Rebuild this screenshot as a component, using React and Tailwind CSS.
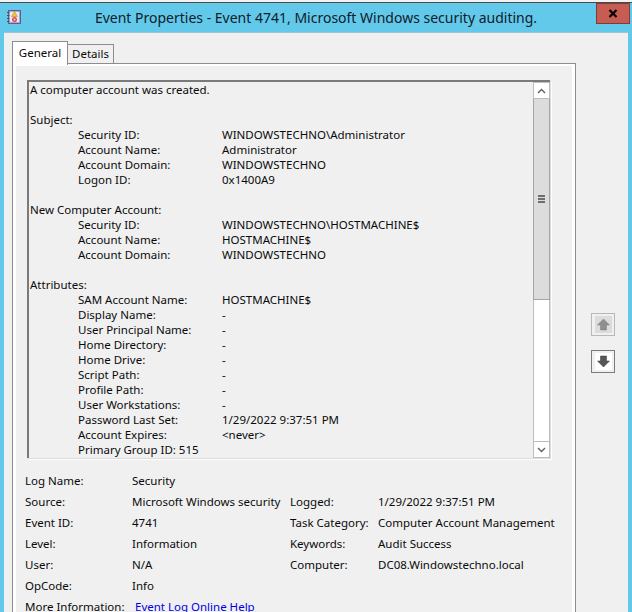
import React from 'react'

const font = { fontFamily: '"Noto Sans", "Open Sans", sans-serif' }

const detailRows = [
  { text: 'A computer account was created.' },
  {},
  { text: 'Subject:' },
  { label: 'Security ID:', value: 'WINDOWSTECHNO\\Administrator' },
  { label: 'Account Name:', value: 'Administrator' },
  { label: 'Account Domain:', value: 'WINDOWSTECHNO' },
  { label: 'Logon ID:', value: '0x1400A9' },
  {},
  { text: 'New Computer Account:' },
  { label: 'Security ID:', value: 'WINDOWSTECHNO\\HOSTMACHINE$' },
  { label: 'Account Name:', value: 'HOSTMACHINE$' },
  { label: 'Account Domain:', value: 'WINDOWSTECHNO' },
  {},
  { text: 'Attributes:' },
  { label: 'SAM Account Name:', value: 'HOSTMACHINE$' },
  { label: 'Display Name:', value: '-' },
  { label: 'User Principal Name:', value: '-' },
  { label: 'Home Directory:', value: '-' },
  { label: 'Home Drive:', value: '-' },
  { label: 'Script Path:', value: '-' },
  { label: 'Profile Path:', value: '-' },
  { label: 'User Workstations:', value: '-' },
  { label: 'Password Last Set:', value: '1/29/2022 9:37:51 PM' },
  { label: 'Account Expires:', value: '<never>' },
  { indented: 'Primary Group ID: 515' },
]

const infoRows = [
  ['Log Name:', 'Security', '', ''],
  ['Source:', 'Microsoft Windows security', 'Logged:', '1/29/2022 9:37:51 PM'],
  ['Event ID:', '4741', 'Task Category:', 'Computer Account Management'],
  ['Level:', 'Information', 'Keywords:', 'Audit Success'],
  ['User:', 'N/A', 'Computer:', 'DC08.Windowstechno.local'],
  ['OpCode:', 'Info', '', ''],
]

function LogIcon() {
  return (
    <svg width="14" height="14" viewBox="0 0 14 14" className="shrink-0">
      <rect x="1.5" y="0.5" width="12" height="13" fill="#a9a6d6" stroke="#5f5f8c" />
      <rect x="3" y="2" width="9" height="10" fill="#eceaf5" />
      <path d="M7.5 1.5 L10.5 6.5 H4.5 Z" fill="#f3c532" stroke="#a67c13" strokeWidth="0.5" />
      <circle cx="7.5" cy="9.5" r="2.5" fill="#d84a4f" />
      <circle cx="7.5" cy="9.5" r="1" fill="#f6dcdc" />
      <path d="M0 2.5h2.5M0 5.5h2.5M0 8.5h2.5M0 11.5h2.5" stroke="#4f4d66" />
    </svg>
  )
}

function ScrollBar() {
  return (
    <div className="flex w-[17px] shrink-0 flex-col">
      <div className="flex h-[17px] items-center justify-center border border-[#bdbdbd] bg-white">
        <svg width="9" height="6" viewBox="0 0 9 6"><path d="M1 5 L4.5 1.5 L8 5" fill="none" stroke="#606060" strokeWidth="1.4" /></svg>
      </div>
      <div className="flex h-[201px] items-center justify-center border-x border-b border-[#a6a6a6] bg-[#dcdcdc]">
        <div className="flex w-[7px] flex-col gap-px">
          <div className="h-[2px] bg-[#6e6e6e]" />
          <div className="h-[2px] bg-[#6e6e6e]" />
          <div className="h-[2px] bg-[#6e6e6e]" />
        </div>
      </div>
      <div className="flex-1 border-x border-[#bdbdbd] bg-white" />
      <div className="flex h-[17px] items-center justify-center border border-[#bdbdbd] bg-white">
        <svg width="9" height="6" viewBox="0 0 9 6"><path d="M1 1 L4.5 4.5 L8 1" fill="none" stroke="#606060" strokeWidth="1.4" /></svg>
      </div>
    </div>
  )
}

function ArrowButton({ down }) {
  return (
    <div className={`flex h-[23px] w-[24px] items-center justify-center border-[1.5px] bg-[#f0f0f0] ${down ? 'border-[#7c7c7c]' : 'border-[#b8b8b8]'}`}>
      <div className={`flex h-[17px] w-[17px] items-center justify-center ${down ? 'bg-white' : 'bg-[#dcdcdc]'}`}>
        <svg width="13" height="13" viewBox="0 0 13 13">
          <path
            d={down ? 'M3.5 1h6v5h3l-6 6-6-6h3z' : 'M3.5 12h6V7h3l-6-6-6 6h3z'}
            fill={down ? '#565656' : '#8f8f8f'}
            stroke={down ? '#3a3a3a' : '#7f7f7f'}
            strokeWidth="0.5"
          />
        </svg>
      </div>
    </div>
  )
}

export default function App() {
  return (
    <div style={font} className="flex h-[612px] w-[632px] flex-col overflow-hidden bg-[#63c9ea] text-[11.5px] leading-[15px] text-[#0a0a0a]">
      <div className="h-[2px] shrink-0 bg-[#f2f2f2]" />
      <div className="h-[1px] shrink-0 bg-[#4a4a4a]" />

      {/* title bar */}
      <div className="grid h-[29px] shrink-0 grid-cols-[1fr_auto_1fr] items-start">
        <div className="pl-[7px] pt-[7px]"><LogIcon /></div>
        <div className="whitespace-nowrap pt-[5px] text-[14px] leading-[20px] text-[#10202a]">
          Event Properties - Event 4741, Microsoft Windows security auditing.
        </div>
        <div className="flex justify-end pr-[2px]">
          <div className="flex h-[21px] w-[34px] items-center justify-center border border-[#7a3d38] bg-[#c75c52]">
            <svg width="10" height="9" viewBox="0 0 10 9"><path d="M1.5 1 L8.5 8 M8.5 1 L1.5 8" stroke="#000" strokeWidth="2.2" /></svg>
          </div>
        </div>
      </div>

      {/* client area */}
      <div className="ml-[4px] mr-[4px] flex min-h-0 flex-1 border-t border-[#9fc4d6] bg-[#f0f0f0] pl-[8px] pt-[8px]">
        <div className="flex w-[564px] shrink-0 flex-col">
          <div className="flex h-[23px] shrink-0 items-end">
            <div className="relative z-10 -mb-px flex h-[24px] w-[56px] items-center justify-center border border-b-0 border-[#8c8c94] bg-white pb-[2px]">General</div>
            <div className="flex h-[20px] w-[46px] items-center justify-center border border-l-0 border-[#8c8c94] bg-[#f0f0f0] pb-[1px]">Details</div>
          </div>

          <div className="-mt-px min-h-0 flex-1 border border-b-0 border-[#8c8c94] bg-white px-[3px] pt-[2px]">
            <div className="h-full bg-[#f0f0f0] pl-[11px] pr-[22px] pt-[14px]">
              {/* description box */}
              <div className="flex h-[378px] border-l-2 border-t-2 border-[#7a7a7a] shadow-[1px_1px_0_#dcdcdc,2px_2px_0_#ffffff]">
                <div className="min-w-0 flex-1 overflow-hidden pl-[1px]">
                  {detailRows.map((row, i) => {
                    if (row.label) {
                      return (
                        <div key={i} className="flex h-[15px] whitespace-nowrap">
                          <span className="ml-[48px] w-[144px] shrink-0">{row.label}</span>
                          <span>{row.value}</span>
                        </div>
                      )
                    }
                    if (row.indented) {
                      return <div key={i} className="ml-[48px] h-[15px] whitespace-nowrap">{row.indented}</div>
                    }
                    return <div key={i} className="h-[15px] whitespace-nowrap">{row.text}</div>
                  })}
                </div>
                <ScrollBar />
              </div>

              {/* event info */}
              <div className="-ml-[2px] mt-[12px] grid grid-cols-[107px_158px_88px_1fr] whitespace-nowrap leading-[21px]">
                {infoRows.map((row) => row.map((cell, i) => <div key={row[0] + i} className="h-[21px]">{cell}</div>))}
                <div>More Information:</div>
                <div className="col-span-3 pl-[3px] text-[#0000e6]">Event Log Online Help</div>
              </div>
            </div>
          </div>
        </div>

        <div className="ml-[15px] flex flex-col gap-[14px] pt-[272px]">
          <ArrowButton />
          <ArrowButton down />
        </div>
      </div>
    </div>
  )
}
